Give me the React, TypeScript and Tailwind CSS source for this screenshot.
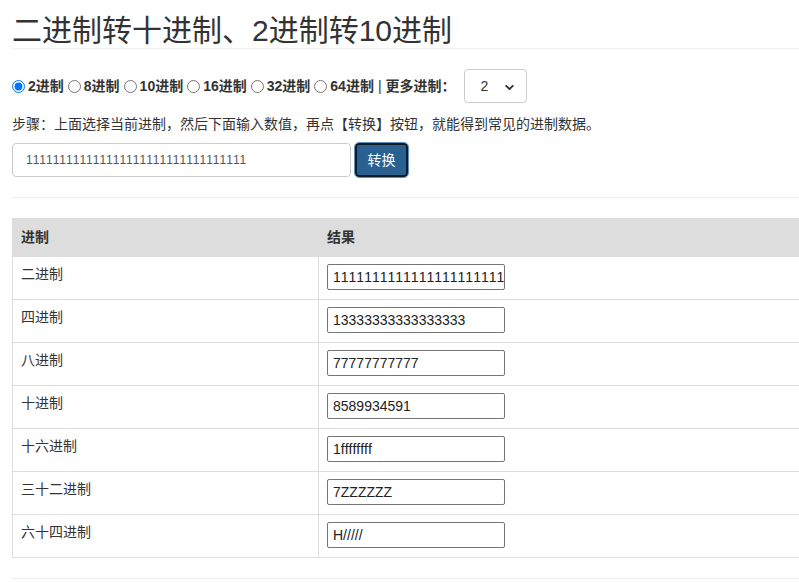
import React from "react";
import { ChevronDown } from "lucide-react";

const bases = ["2", "8", "10", "16", "32", "64"];

const rows = [
  { name: "二进制", value: "111111111111111111111111111111111" },
  { name: "四进制", value: "13333333333333333" },
  { name: "八进制", value: "77777777777" },
  { name: "十进制", value: "8589934591" },
  { name: "十六进制", value: "1ffffffff" },
  { name: "三十二进制", value: "7ZZZZZZ" },
  { name: "六十四进制", value: "H/////" },
];

const App = () => {
  return (
    <div className="w-full overflow-hidden bg-white text-[#333] text-[14px] [font-kerning:none] font-['Liberation_Sans','Noto_Sans_CJK_SC',sans-serif]">
      <div className="w-[1100px] pl-3">
        {/* Title */}
        <div className="pt-[14px] pb-px border-b border-[#eee]">
          <h1 className="text-[30px] leading-[33px] font-normal">
            二进制转十进制、2进制转10进制
          </h1>
        </div>

        {/* Base choice */}
        <div className="mt-5 h-[34px] flex items-center font-bold">
          {bases.map((b, i) => (
            <label key={b} className={`flex items-center ${i > 0 ? "ml-[4px]" : ""}`}>
              <input
                type="radio"
                name="base"
                defaultChecked={i === 0}
                className="w-[13px] h-[13px] mr-[3px]"
              />
              {b}进制
            </label>
          ))}
          <span className="ml-[4px] font-normal">|</span>
          <span className="ml-[4px]">更多进制：</span>
          <div className="relative ml-2 w-[63px] h-[34px] border border-[#ccc] rounded-[4px] flex items-center font-normal">
            <span className="pl-[16px]">2</span>
            <ChevronDown size={13} strokeWidth={3.5} className="absolute right-[10px] top-[11px] text-[#333]" />
          </div>
        </div>

        {/* Steps */}
        <p className="mt-[11px] leading-5">
          步骤：上面选择当前进制，然后下面输入数值，再点【转换】按钮，就能得到常见的进制数据。
        </p>

        {/* Input + button */}
        <div className="mt-[9px] flex items-center gap-1">
          <div className="w-[339px] h-[34px] border border-[#ccc] rounded-[4px] pl-[13px] flex items-center text-[12px] text-[#555]">
            111111111111111111111111111111111
          </div>
          <button className="w-[53px] h-[34px] rounded-[4px] bg-[#286090] text-white text-[14px] border-2 border-[#0f1c28] outline outline-1 outline-[#5b8fbf]">
            转换
          </button>
        </div>

        <div className="mt-5 border-t border-[#eee]" />

        {/* Result table */}
        <div className="mt-5 border-l border-[#ddd]">
          <div className="flex h-[39px] bg-[#ddd] font-bold items-center">
            <div className="w-[306px] pl-2">进制</div>
            <div className="pl-2">结果</div>
          </div>
          {rows.map((r) => (
            <div key={r.name} className="flex h-[43px] border-b border-[#ddd]">
              <div className="w-[306px] border-r border-[#ddd] pl-2 pt-[7px] leading-5">
                {r.name}
              </div>
              <div className="pl-2 pt-[7px]">
                <div className="w-[178px] h-[26px] border border-[#767676] rounded-[2px] pl-[5px] flex items-center overflow-hidden whitespace-nowrap text-[14px] text-[#222]">
                  {r.value}
                </div>
              </div>
            </div>
          ))}
        </div>

        <div className="mt-5 border-t border-[#eee] h-[6px]" />
      </div>
    </div>
  );
};

export default App;
